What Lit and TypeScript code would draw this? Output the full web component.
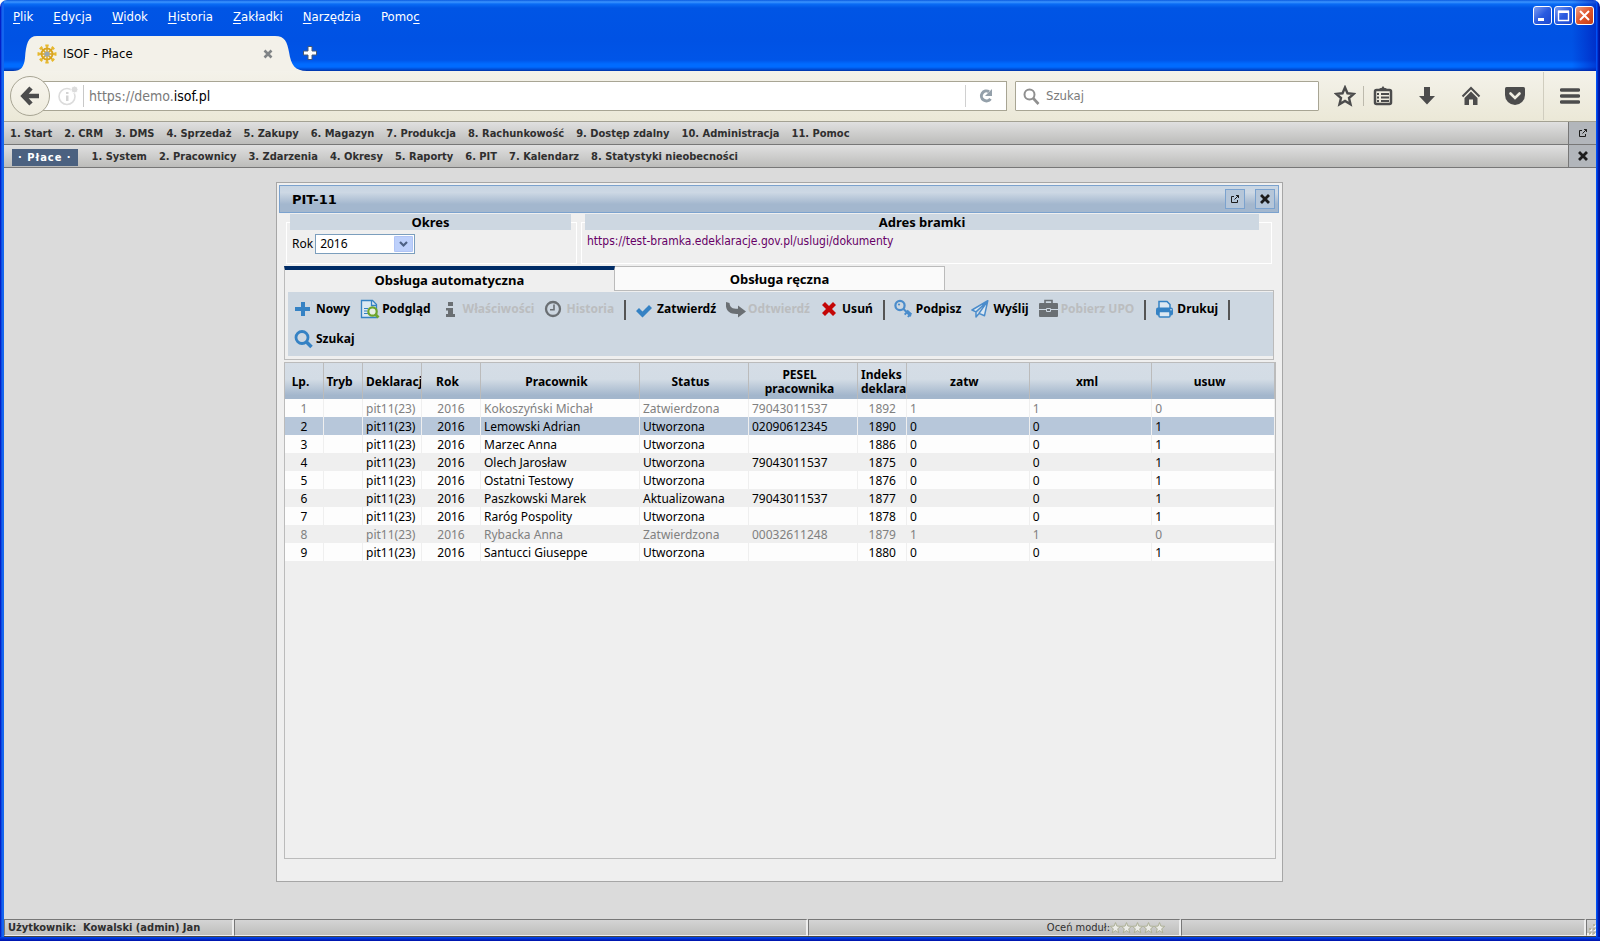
import { LitElement, html, css, svg, nothing } from "lit";
import { customElement, state } from "lit/decorators.js";
import { classMap } from "lit/directives/class-map.js";

const icon = (w: number, h: number, body: unknown) =>
  html`<svg width=${w} height=${h} viewBox="0 0 ${w} ${h}" aria-hidden="true">${body}</svg>`;

const BLUE = "#3582c4";
const GREY = "#6a6f73";

const popout = () =>
  icon(10, 10, svg`<path d="M4 2.500H1.500v6h6V6M6 1.500h2.500V4M8.500 1.500L4.500 5.500" fill="none" stroke="#1c1c1c"/>`);
const cross = () =>
  icon(10, 10, svg`<path d="M2 2l6 6M8 2l-6 6" fill="none" stroke="#1c1c1c" stroke-width="2.800" stroke-linecap="square"/>`);

const ICONS: Record<string, unknown> = {
  plus: icon(20, 20, svg`<path d="M7 3h4v5h5v4h-5v5H7v-5H1V8h6z" fill="${BLUE}"/>`),
  preview: icon(20, 20, svg`
    <path d="M1.500 1.500h11l4 4v13h-15z" fill="#dce8f2" stroke="${BLUE}" stroke-width="1.300"/>
    <path d="M11.500 1.500v5h5" fill="none" stroke="${BLUE}" stroke-width="1.300"/>
    <path d="M4 9.500h4M4 12h3M4 14.500h4" stroke="${BLUE}" stroke-width="1.200"/>
    <circle cx="12.500" cy="12.500" r="4.200" fill="#e8efe6" stroke="#6fa52c" stroke-width="2.200"/>
    <path d="M15.500 15.500l3 3" stroke="#6fa52c" stroke-width="2.800"/>`),
  info: icon(20, 20, svg`<path d="M7 3h5v4H7zM5 9h7v6h2v3H5v-3h2v-3.500H5z" fill="${GREY}"/>`),
  clock: icon(20, 20, svg`<circle cx="9" cy="10" r="7" fill="none" stroke="${GREY}" stroke-width="2.300"/>
    <path d="M10 5.500v5.200H6" fill="none" stroke="${GREY}" stroke-width="1.600"/>`),
  check: icon(20, 20, svg`<path d="M1 12l3-3 3.500 3.500L14 6l3 3-9.500 9.500z" fill="${BLUE}"/>`),
  undo: icon(20, 20, svg`<path d="M0 3l3.500 1C4 8.500 6 9.800 12 9.800V6.500l8 6-8 6V15C3 15.500-1 11.500 0 3z" fill="${GREY}"/>`),
  del: icon(20, 20, svg`<path d="M2 6l3-3 4 4 4-4 3 3-4 4 4 4-3 3-4-4-4 4-3-3 4-4z" fill="#c40606"/>`),
  key: icon(20, 20, svg`<circle cx="6" cy="6.500" r="4.600" fill="none" stroke="#4a8ccb" stroke-width="2.200"/>
    <circle cx="5" cy="5.500" r="1.100" fill="#4a8ccb"/>
    <path d="M9.300 9.800l7.500 7.500M12.700 13.400l-2 2.200M15.500 16l-1.600 2M13 11.500l4.500 4" stroke="#4a8ccb" stroke-width="2" fill="none"/>`),
  plane: icon(20, 20, svg`<path d="M16.800 1.700L1 11l4 1.900v5l3-3.500 5.500 2.300zM5 12.900L16.500 2.200 8 14.400" fill="#dce8f2" stroke="#4a8ccb" stroke-width="1.500" stroke-linejoin="round"/>`),
  briefcase: icon(20, 20, svg`<path d="M6 4.500v-3h7v3" fill="none" stroke="${GREY}" stroke-width="1.600"/>
    <rect x="0" y="4" width="19" height="14" rx="1" fill="${GREY}"/>
    <path d="M0 10.500h7M12 10.500h7M7.500 9.500h4v3h-4z" stroke="#cdd7e1" fill="none"/>`),
  printer: icon(20, 20, svg`<path d="M4 9V2.500h8l3 3V9" fill="#dce8f2" stroke="${BLUE}" stroke-width="1.500"/>
    <rect x="1" y="8.500" width="17" height="8" rx="2" fill="${BLUE}"/>
    <rect x="4" y="12.500" width="11" height="5.500" rx="1" fill="#dce8f2" stroke="${BLUE}" stroke-width="1.500"/>
    <circle cx="16" cy="10.700" r=".8" fill="#dce8f2"/>`),
  search: icon(20, 20, svg`<circle cx="8" cy="8.500" r="6" fill="none" stroke="${BLUE}" stroke-width="2.800"/>
    <path d="M12.500 13l5 5" stroke="${BLUE}" stroke-width="3.600"/>`),
};

interface Action { label: string; icon: string; off?: boolean }
const ACTIONS: (Action | null)[] = [
  { label: "Nowy", icon: "plus" },
  { label: "Podgląd", icon: "preview" },
  { label: "Właściwości", icon: "info", off: true },
  { label: "Historia", icon: "clock", off: true },
  null,
  { label: "Zatwierdź", icon: "check" },
  { label: "Odtwierdź", icon: "undo", off: true },
  { label: "Usuń", icon: "del" },
  null,
  { label: "Podpisz", icon: "key" },
  { label: "Wyślij", icon: "plane" },
  { label: "Pobierz UPO", icon: "briefcase", off: true },
  null,
  { label: "Drukuj", icon: "printer" },
  null,
  { label: "Szukaj", icon: "search" },
];

interface Row { who: string; status: string; pesel: string; idx: number; zatw: number; xml: number; usuw: number }
const row = (who: string, status: string, pesel: string, idx: number, done = false): Row =>
  ({ who, status, pesel, idx, zatw: done ? 1 : 0, xml: done ? 1 : 0, usuw: done ? 0 : 1 });
const ROWS: Row[] = [
  row("Kokoszyński Michał", "Zatwierdzona", "79043011537", 1892, true),
  row("Lemowski Adrian", "Utworzona", "02090612345", 1890),
  row("Marzec Anna", "Utworzona", "", 1886),
  row("Olech Jarosław", "Utworzona", "79043011537", 1875),
  row("Ostatni Testowy", "Utworzona", "", 1876),
  row("Paszkowski Marek", "Aktualizowana", "79043011537", 1877),
  row("Raróg Pospolity", "Utworzona", "", 1878),
  row("Rybacka Anna", "Zatwierdzona", "00032611248", 1879, true),
  row("Santucci Giuseppe", "Utworzona", "", 1880),
];

const base = css`
  * { box-sizing: border-box; }
  svg { display: block; flex: none; }
  button { font: inherit; color: inherit; border: 0; padding: 0; margin: 0; background: none; }
`;

@customElement("browser-chrome")
class BrowserChrome extends LitElement {
  static styles = [base, css`
    :host { display: block; font: 13px/18px "DejaVu Sans Condensed", "Noto Sans", sans-serif; }
    .title {
      background:
        linear-gradient(to left, rgba(0, 20, 180, .55), rgba(0, 20, 180, 0) 24px),
        linear-gradient(#0a5ae0 0, #3c95ff 2px, #0a6cf5 4px, #0055e5 8px, #0052e4 40px, #0055e8 60px, #006bff 64px, #006bff 67px, #0043c8 70px, #002f9c 71px);
    }
    .menu { display: flex; align-items: center; height: 34px; padding: 0 2px 0 9px; gap: 20px; color: #fff; }
    .menu u { text-underline-offset: 2px; }
    .winbtns { display: flex; gap: 2px; margin-left: auto; align-self: flex-start; padding-top: 6px; }
    .win { display: grid; place-items: center; width: 19px; height: 19px; border: 1px solid #fff; border-radius: 3px; background: linear-gradient(135deg, #7d9cf0, #2a5be0 50%, #1c48cf); }
    .win.close { background: linear-gradient(135deg, #f0a083, #e0552c 50%, #c73c12); }
    .tabs { display: flex; align-items: flex-end; height: 37px; padding-left: 9px; }
    .tab { display: flex; align-items: center; width: 238px; height: 35px; background: #f3f1e9; color: #000; }
    .tab .name { margin: 0 auto 0 6px; }
    .tab button { margin-right: 2px; }
    .add { align-self: center; margin-left: -5px; }
    .bar { display: flex; align-items: center; height: 51px; padding-left: 6px; background: linear-gradient(#f4f2ea, #ebe8d7); border-bottom: 1px solid #a3a193; }
    .back { display: grid; place-items: center; width: 40px; height: 40px; border: 1px solid #a8a594; border-radius: 50%; background: linear-gradient(#f7f5ee, #efecde); position: relative; z-index: 1; }
    .url, .find { display: flex; align-items: center; height: 30px; background: #fff; border: 1px solid #a8a594; }
    .url { flex: 964 1 0; margin-left: -7px; padding-left: 14px; font-size: 14px; }
    .url .pre { color: #7a7a7a; padding-left: 5px; border-left: 1px solid #c8c8c8; margin-left: 5px; line-height: 22px; }
    .url .go { width: 41px; height: 22px; display: grid; place-items: center; border-left: 1px solid #d0d0d0; }
    input { font: inherit; color: #000; border: 0; outline: 0; padding: 0; background: none; flex: 1; min-width: 0; }
    input::placeholder { color: #7a7a7a; opacity: 1; }
    .find { flex: 300 1 0; margin-left: 8px; border-radius: 1px; padding-left: 7px; gap: 6px; }
    .tools { display: flex; align-items: center; margin-left: 8px; gap: 4px; }
    .tools button { display: grid; place-items: center; width: 40px; height: 40px; }
    .tools .star { width: 36px; }
    .tools .line { width: 1px; height: 20px; background: #bdbaad; margin: 0 -5px 0 -4px; }
    .tools .ham { width: 53px; height: 48px; border-left: 1px solid #d0cdbf; margin-left: 4px; }
  `];
  render() {
    const menu: [string, string, string][] = [
      ["", "P", "lik"], ["", "E", "dycja"], ["", "W", "idok"], ["", "H", "istoria"],
      ["", "Z", "akładki"], ["", "N", "arzędzia"], ["Pomo", "c", ""],
    ];
    const ink = "#4c4c4c";
    return html`
      <header class="title">
        <div class="menu">
          ${menu.map(([a, b, c]) => html`<button>${a}<u>${b}</u>${c}</button>`)}
          <div class="winbtns">
            <button class="win" aria-label="Minimalizuj">${icon(13, 13, svg`<rect x="2" y="9" width="6" height="3" fill="#fff"/>`)}</button>
            <button class="win" aria-label="Maksymalizuj">${icon(13, 13, svg`<path d="M1.500 2.500h10v9h-10z" fill="none" stroke="#fff" stroke-width="1.400"/><path d="M1 1.500h11v2.500H1z" fill="#fff"/>`)}</button>
            <button class="win close" aria-label="Zamknij">${icon(13, 13, svg`<path d="M2 2l9 9M11 2l-9 9" stroke="#fff" stroke-width="2"/>`)}</button>
          </div>
        </div>
        <div class="tabs">
          ${icon(24, 35, svg`<path d="M0 35C8 35 11 31 12 22C13 8 15 0 24 0V35z" fill="#f3f1e9"/>`)}
          <div class="tab">
            ${icon(20, 20, svg`
              <circle cx="10" cy="10" r="5.500" fill="none" stroke="#d9a520" stroke-width="2"/>
              ${[0, 45, 90, 135].map((a) => svg`<path d="M10 1v18" stroke="#d9a520" stroke-width="1.500" transform="rotate(${a} 10 10)"/>
                <path d="M8.300 1.500h3.400M8.300 18.500h3.400" stroke="#e8b92c" stroke-width="2" transform="rotate(${a} 10 10)"/>`)}
              <circle cx="10" cy="10" r="2.600" fill="#9aa7b0"/>`)}
            <span class="name">ISOF - Płace</span>
            <button aria-label="Zamknij kartę">${icon(10, 10, svg`<path d="M1.500 1.500l7 7M8.500 1.500l-7 7" stroke="#808486" stroke-width="2.600"/>`)}</button>
          </div>
          ${icon(32, 35, svg`<path d="M0 0C10 0 12 6 14 16C16 29 20 35 32 35H0z" fill="#f3f1e9"/>`)}
          <button class="add" aria-label="Nowa karta">${icon(16, 16, svg`<path d="M6 1.500h4V6h4.500v4H10v4.500H6V10H1.500V6H6z" fill="#fff" stroke="#4a5a70"/>`)}</button>
        </div>
      </header>
      <div class="bar">
        <button class="back" aria-label="Wstecz">${icon(20, 20, svg`<path d="M11 2L3.500 10l7.500 8M4 10H19" fill="none" stroke="${ink}" stroke-width="4.600"/>`)}</button>
        <label class="url">
          ${icon(20, 20, svg`<circle cx="9" cy="10.500" r="8" fill="none" stroke="#dcdcdc" stroke-width="1.600"/><path d="M8 6h2.500v2H8zM8 9.500h2.500V15H8z" fill="#d4d4d4"/><circle cx="16.500" cy="3.500" r="3.500" fill="#dcdcdc" stroke="#fff"/>`)}
          <span class="pre">https://demo.</span><input value="isof.pl" aria-label="Adres" />
          <button class="go" aria-label="Odśwież">${icon(16, 16, svg`<path d="M12.500 10.800A5 5 0 1 1 11 3.600" fill="none" stroke="#94a0aa" stroke-width="3"/><path d="M14 1v7H7z" fill="#94a0aa"/>`)}</button>
        </label>
        <label class="find">
          ${icon(17, 17, svg`<circle cx="6.500" cy="6.500" r="5" fill="none" stroke="#8f8f8f" stroke-width="2"/><path d="M10 10l5.500 6" stroke="#8f8f8f" stroke-width="2.600"/>`)}
          <input placeholder="Szukaj" aria-label="Szukaj" />
        </label>
        <div class="tools">
          <button class="star" aria-label="Dodaj zakładkę">${icon(22, 22, svg`<path d="M11 2.500l2.500 5.800 6.200.6-4.700 4.100 1.500 6.300L11 16l-5.500 3.300L7 13 2.300 8.900l6.200-.6z" fill="none" stroke="${ink}" stroke-width="2.400"/>`)}</button>
          <span class="line"></span>
          <button aria-label="Zakładki">${icon(20, 20, svg`<path d="M6 3l1.500-1h1L10 0l1.500 2h1L14 3z" fill="${ink}"/><rect x="2" y="4" width="16" height="14" rx="1.500" fill="none" stroke="${ink}" stroke-width="2.500"/><path d="M4 8h2M4 11.500h2M4 15h2M8 8h8M8 11.500h8M8 15h8" stroke="${ink}" stroke-width="1.800"/>`)}</button>
          <button aria-label="Pobieranie">${icon(20, 20, svg`<path d="M7 1h6v9h5l-8 8.500L2 10h5z" fill="${ink}"/>`)}</button>
          <button aria-label="Strona startowa">${icon(20, 20, svg`<path d="M1.500 10.500L10 2l8.500 8.500" fill="none" stroke="${ink}" stroke-width="2"/><path d="M10 5.500l6.500 6.500v7H12v-5.500H8V19H3.500v-7z" fill="${ink}"/>`)}</button>
          <button aria-label="Pocket">${icon(22, 20, svg`<path d="M2.500 1h17Q21 1 21 2.500V9a10 10 0 0 1-20 0V2.500Q1 1 2.500 1z" fill="${ink}"/><path d="M6.500 7.500L11 12l4.500-4.500" fill="none" stroke="#f0eee2" stroke-width="2.600" stroke-linecap="round"/>`)}</button>
          <button class="ham" aria-label="Menu">${icon(20, 20, svg`<path d="M1.500 4h17M1.500 10h17M1.500 16h17" stroke="${ink}" stroke-width="3.400" stroke-linecap="round"/>`)}</button>
        </div>
      </div>`;
  }
}

@customElement("module-menu")
class ModuleMenu extends LitElement {
  static styles = [base, css`
    :host { display: block; font: bold 11px/16px "DejaVu Sans Condensed", "Noto Sans", sans-serif; color: #2f2f2f; }
    nav { display: flex; align-items: stretch; height: 23px; background: linear-gradient(#e0e0e0, #bcbcba); border-bottom: 1px solid #777; }
    ul { display: flex; align-items: center; gap: 12px; margin: 0; padding: 2px 0 0 6px; list-style: none; flex: 1; }
    ul.sub { padding-left: 8px; }
    a { color: inherit; text-decoration: none; }
    .badge { display: block; background: #4b6180; color: #fff; padding: 0 6px; line-height: 17px; letter-spacing: 1px; margin-right: 2px; }
    .side { width: 28px; display: grid; place-items: center; background: #b2b6bb; border-left: 1px solid #777; }
  `];
  render() {
    const top = ["1. Start", "2. CRM", "3. DMS", "4. Sprzedaż", "5. Zakupy", "6. Magazyn", "7. Produkcja", "8. Rachunkowość", "9. Dostęp zdalny", "10. Administracja", "11. Pomoc"];
    const sub = ["1. System", "2. Pracownicy", "3. Zdarzenia", "4. Okresy", "5. Raporty", "6. PIT", "7. Kalendarz", "8. Statystyki nieobecności"];
    const link = (t: string) => html`<li><a href="#">${t}</a></li>`;
    return html`
      <nav aria-label="Moduły"><ul>${top.map(link)}</ul><button class="side" aria-label="Nowe okno">${popout()}</button></nav>
      <nav aria-label="Płace"><ul class="sub"><li class="badge">· Płace ·</li>${sub.map(link)}</ul><button class="side" aria-label="Zamknij moduł">${cross()}</button></nav>`;
  }
}

@customElement("pit-window")
class PitWindow extends LitElement {
  @state() private picked = 1;
  static styles = [base, css`
    :host { display: flex; flex-direction: column; padding: 2px; background: #efefef; border: 1px solid #a6a6a6; font: 12px/18px "Noto Sans", "DejaVu Sans", sans-serif; color: #000; }
    .head { display: flex; align-items: center; gap: 10px; height: 28px; margin-right: 1px; padding: 0 3px 0 12px; border: 1px solid #7ba2ce; background: linear-gradient(#c8d5e3, #cdd8e4 25%, #a3b7ce 70%, #a3b7ce); }
    h1 { flex: 1; margin: 0; padding-top: 2px; font: bold 13px/18px "DejaVu Sans", sans-serif; }
    .box { display: grid; place-items: center; width: 20px; height: 20px; border: 1px solid #7ba2ce; background: #b5c6d9; }
    .body { flex: 1; display: flex; flex-direction: column; padding: 1px 4px 20px 5px; }
    .sets { display: grid; grid-template-columns: 291fr 691fr; gap: 4px; margin: 0 4px 0 2px; }
    fieldset { min-width: 0; margin: 0; height: 50px; padding: 0 5px 0 3px; border: 1px solid #fff; }
    .gate { padding-right: 12px; }
    legend { width: 100%; padding: 0; background: #cdd7e1; text-align: center; font-weight: bold; font-size: 13px; line-height: 16px; }
    .pick { display: flex; align-items: center; gap: 2px; padding: 4px 2px; }
    .combo { display: grid; align-items: center; width: 100px; height: 20px; border: 1px solid #7b9ebd; background: #fff; }
    .combo > * { grid-area: 1 / 1; }
    select { appearance: none; border: 0; outline: 0; background: none; font: 12px/18px "Noto Sans", sans-serif; color: #000; width: 100%; height: 18px; padding: 0 0 0 4px; }
    .combo svg { justify-self: end; margin-right: 1px; pointer-events: none; }
    .link { display: block; padding: 2px 2px; color: #660066; text-decoration: none; font-family: "DejaVu Sans Condensed", sans-serif; }
    .tabs { display: flex; margin: 2px 2px -1px 0; position: relative; }
    .tab { flex: 0 0 33.4%; height: 25px; font-weight: bold; font-size: 13px; background: #fafafa; border: 1px solid #bbb; border-left: 0; }
    .tab.on { background: #efefef; border: 0; border-left: 1px solid #bbb; border-top: 4px solid #002c66; padding-bottom: 2px; border-right: 1px solid #bbb; }
    .panel { border: 1px solid #bbb; margin-right: 2px; padding: 1px 0 3px 3px; }
    .actions { display: flex; flex-wrap: wrap; column-gap: 10px; padding: 2px 0 2px 6px; background: #cdd7e1; }
    .act { display: flex; align-items: center; gap: 2px; height: 30px; font-weight: bold; }
    .act:disabled { color: #bbbdbf; }
    .sep { width: 2px; height: 20px; margin: 6px -1px 0 0; background: #555; }
    .grid { flex: 1; margin-top: 2px; border: 1px solid #bbb; }
    table { width: 100%; table-layout: fixed; border-collapse: separate; border-spacing: 0; }
    th, td { overflow: hidden; white-space: nowrap; text-align: left; vertical-align: middle; border-right: 1px solid #efefef; }
    th { height: 36px; padding: 2px 7px 0 0; line-height: 14px; border-right-color: #bbb; background: linear-gradient(#d5dde6, #d3dce5 45%, #a3b6cc 90%, #a3b6cc); text-align: center; }
    th.cut { text-align: left; padding: 2px 0 0 3px; }
    td { height: 18px; padding: 2px 0 0 3px; line-height: 16px; }
    td.mid { text-align: center; padding-left: 0; }
    td.idx { text-align: right; padding-right: 10px; }
    tbody tr { background: #efefef; }
    tbody tr:nth-child(odd) { background: #fdfdfd; }
    tbody tr.done { color: #808080; }
    tbody tr.sel { background: #b7c7da; }
    .c39 { width: 39px; } .c49 { width: 49px; } .c59 { width: 59px; } .c109 { width: 109px; } .c159 { width: 159px; }
  `];
  render() {
    return html`
      <div class="head">
        <h1>PIT-11</h1>
        <button class="box" aria-label="Nowe okno">${popout()}</button>
        <button class="box" aria-label="Zamknij">${cross()}</button>
      </div>
      <div class="body">
        <div class="sets">
          <fieldset>
            <legend>Okres</legend>
            <div class="pick">
              <label for="rok">Rok</label>
              <span class="combo">
                <select id="rok"><option>2016</option><option>2015</option></select>
                ${icon(19, 16, svg`<rect width="19" height="16" rx="1" fill="#bdd0fb"/><rect x=".5" y=".5" width="18" height="15" rx="1" fill="none" stroke="#b0c4f5"/><path d="M6 6l3.500 3.500L13 6" fill="none" stroke="#4d6185" stroke-width="2.200"/>`)}
              </span>
            </div>
          </fieldset>
          <fieldset class="gate">
            <legend>Adres bramki</legend>
            <a class="link" href="#">https://test-bramka.edeklaracje.gov.pl/uslugi/dokumenty</a>
          </fieldset>
        </div>
        <div class="tabs" role="tablist">
          <button class="tab on" role="tab" aria-selected="true">Obsługa automatyczna</button>
          <button class="tab" role="tab" aria-selected="false">Obsługa ręczna</button>
        </div>
        <div class="panel">
          <div class="actions" role="toolbar">
            ${ACTIONS.map((a) => a
              ? html`<button class="act" ?disabled=${!!a.off}>${ICONS[a.icon]}<span>${a.label}</span></button>`
              : html`<span class="sep"></span>`)}
          </div>
        </div>
        <div class="grid">
          <table>
            <colgroup>
              <col class="c39" /><col class="c39" /><col class="c59" /><col class="c59" /><col class="c159" />
              <col class="c109" /><col class="c109" /><col class="c49" /><col /><col /><col />
            </colgroup>
            <thead><tr>
              <th>Lp.</th><th>Tryb</th><th class="cut">Deklaracja</th><th>Rok</th>
              <th>Pracownik</th><th>Status</th><th>PESEL<br />pracownika</th><th class="cut">Indeks<br />deklaracji</th>
              <th>zatw</th><th>xml</th><th>usuw</th>
            </tr></thead>
            <tbody>
              ${ROWS.map((r, i) => html`
                <tr class=${classMap({ done: r.zatw === 1, sel: i === this.picked })} @click=${() => (this.picked = i)}>
                  <td class="mid">${i + 1}</td><td></td><td>pit11(23)</td><td class="mid">2016</td>
                  <td>${r.who}</td><td>${r.status}</td><td>${r.pesel || nothing}</td><td class="idx">${r.idx}</td>
                  <td>${r.zatw}</td><td>${r.xml}</td><td>${r.usuw}</td>
                </tr>`)}
            </tbody>
          </table>
        </div>
      </div>`;
  }
}

@customElement("status-bar")
class StatusBar extends LitElement {
  static styles = [base, css`
    :host { display: grid; grid-template-columns: 230fr 574fr 373fr 405fr 10fr; font: 11px/16px "DejaVu Sans Condensed", "Noto Sans", sans-serif; color: #2f2f2f; background: linear-gradient(#d6d6d6, #bcbcba); }
    .cell { display: flex; align-items: center; min-width: 0; padding-top: 1px; border: 1px solid #777; border-right: 2px solid #eee; border-bottom-color: #eee; white-space: nowrap; overflow: hidden; }
    .user { padding-left: 3px; font-weight: bold; white-space: pre; }
    .rate { justify-content: flex-end; padding-right: 14px; }
    .grip { justify-content: flex-end; border-right: 0; }
    button { display: block; }
  `];
  render() {
    return html`
      <div class="cell user">Użytkownik:  Kowalski (admin) Jan</div>
      <div class="cell"></div>
      <div class="cell rate">Oceń moduł:${[1, 2, 3, 4, 5].map((n) => html`<button aria-label="Ocena ${n}">${icon(11, 12, svg`<path d="M5.500 .6l1.400 3.500 3.800.2-3 2.500 1.100 4-3.300-2.200-3.300 2.200 1.100-4-3-2.500 3.800-.2z" fill="#ecece8" stroke="#adb096"/>`)}</button>`)}</div>
      <div class="cell"></div>
      <div class="cell grip">${icon(9, 13, svg`<path d="M7 3h2v2H7zM3 7h2v2H3zM7 7h2v2H7zM0 11h2v2H0zM3 11h2v2H3zM7 11h2v2H7z" fill="#f4f4ee"/><path d="M6 2h2v2H6zM2 6h2v2H2zM6 6h2v2H6zM2 10h2v2H2zM6 10h2v2H6z" fill="#b4b29c"/>`)}</div>`;
  }
}

@customElement("app-root")
class AppRoot extends LitElement {
  static styles = [base, css`
    :host {
      display: flex; flex-direction: column; box-sizing: border-box; min-height: 100vh; padding: 0 4px 4px;
      border-radius: 7px 7px 0 0; overflow: hidden;
      background:
        linear-gradient(#0048f0, #0010a8) bottom / 100% 4px no-repeat,
        linear-gradient(to right, #0010b4 0, #0831d9 1px, #1465ee 2px, #1465ee 4px, transparent 4px) left / 50% 100% no-repeat,
        linear-gradient(to left, #000f96 0, #0020b4 2px, #0050f5 3px, #0050f5 4px, transparent 4px) right / 50% 100% no-repeat,
        #dbdbdb;
    }
    main { flex: 1; display: flex; padding: 14px 313px 37px 272px; background: #dbdbdb; }
    pit-window { flex: 1; min-width: 0; }
    status-bar { border-bottom: 1px solid #444; height: 18px; }
  `];
  render() {
    return html`
      <browser-chrome></browser-chrome>
      <module-menu></module-menu>
      <main><pit-window></pit-window></main>
      <status-bar></status-bar>`;
  }
}
